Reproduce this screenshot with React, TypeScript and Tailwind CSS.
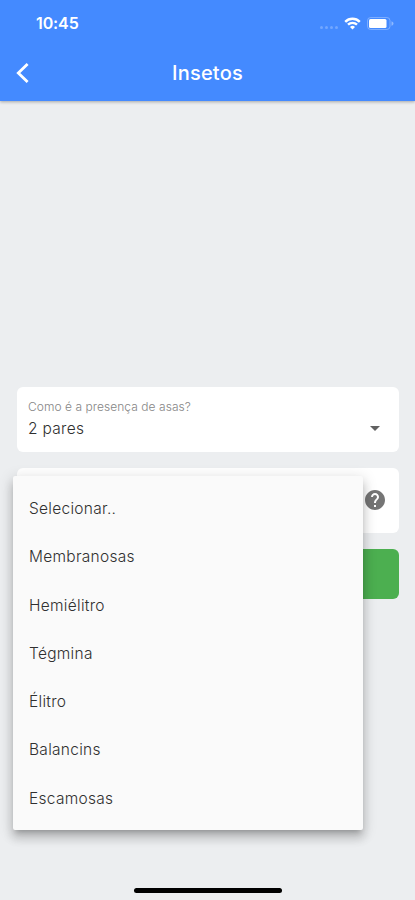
import React from 'react';

const options: string[] = [
  'Selecionar..',
  'Membranosas',
  'Hemiélitro',
  'Tégmina',
  'Élitro',
  'Balancins',
  'Escamosas',
];

const StatusBar: React.FC = () => (
  <div className="flex h-[46px] items-center justify-between pl-9 pr-[20px]">
    <span className="text-[16px] leading-none font-semibold tracking-[-0.1px]">10:45</span>
    <div className="flex items-center">
      {/* No signal */}
      <div className="mt-2 mr-[6px] flex gap-[2px]">
        {[0, 1, 2, 3].map((dot) => (
          <span key={dot} className="h-[3px] w-[3px] rounded-full bg-white/25" />
        ))}
      </div>
      <svg width="17" height="13" viewBox="0 0 17 13" fill="none" stroke="white" strokeWidth="2.4">
        <path d="M1.2 4.8a10.3 10.3 0 0 1 14.6 0" />
        <path d="M4 7.7a6.4 6.4 0 0 1 9 0" />
        <path d="M8.5 12.6L6 10a3.6 3.6 0 0 1 5 0z" fill="white" stroke="none" />
      </svg>
      <svg className="ml-[6px]" width="28" height="13" viewBox="0 0 28 13">
        <rect x="0.5" y="0.5" width="22.5" height="12" rx="3.2" fill="none" stroke="white" strokeOpacity="0.3" />
        <rect x="2" y="2" width="17.5" height="9" rx="1.5" fill="white" />
        <path d="M24.5 4.2v4.6c1.2-.4 2-1.3 2-2.3s-.8-1.900-2-2.300z" fill="white" fillOpacity="0.4" />
      </svg>
    </div>
  </div>
);

const Header: React.FC = () => (
  <header className="relative h-[100.5px] shrink-0 bg-[#448aff] text-white shadow-[0_1px_3px_rgba(0,0,0,0.3)]">
    <StatusBar />
    <div className="grid h-[54px] grid-cols-[56px_1fr_56px] items-center">
      <button aria-label="Voltar" className="pl-[15px]">
        <svg width="15" height="22" viewBox="0 0 15 22" fill="none" stroke="white" strokeWidth="2.8">
          <path d="M12.600 2L3.300 11l9.300 9" />
        </svg>
      </button>
      <h1 className="text-center text-[20px] leading-none font-medium tracking-[0.2px]">Insetos</h1>
    </div>
  </header>
);

const HelpIcon: React.FC = () => (
  <svg width="24" height="24" viewBox="0 0 24 24" fill="#757575">
    <path d="M12 2C6.480 2 2 6.480 2 12s4.480 10 10 10 10-4.480 10-10S17.520 2 12 2zm1 17h-2v-2h2v2zm2.070-7.750l-.9.920C13.450 12.900 13 13.500 13 15h-2v-.5c0-1.100.45-2.100 1.170-2.830l1.240-1.260c.37-.36.59-.86.59-1.410 0-1.100-.9-2-2-2s-2 .9-2 2H8c0-2.210 1.790-4 4-4s4 1.790 4 4c0 .88-.36 1.680-.93 2.250z" />
  </svg>
);

const Menu: React.FC = () => (
  <ul className="absolute top-[89px] left-[13px] w-[350px] rounded-[2px] bg-[#fafafa] pt-[8.500px] pb-[7.500px] shadow-[0_5px_5px_-3px_rgba(0,0,0,0.2),0_8px_10px_1px_rgba(0,0,0,0.14),0_3px_14px_2px_rgba(0,0,0,0.12)]">
    {options.map((option) => (
      <li key={option} className="flex h-[48.25px] items-center px-4 text-[15.5px] font-[360] tracking-[0.28px] text-[#303030]">
        {option}
      </li>
    ))}
  </ul>
);

const App: React.FC = () => (
  <div className="flex h-[900px] w-full flex-col overflow-hidden bg-[#eceef0] font-['Inter','Liberation_Sans',sans-serif]">
    <Header />

    <main className="relative mt-[286.5px] flex flex-1 flex-col px-4">
      <div className="ml-px flex h-[65px] shrink-0 items-end justify-between rounded-[6px] bg-white pr-3 pb-3 pl-[11px]">
        <div className="-mb-px">
          <p className="text-[12px] leading-[18px] font-[360] tracking-[0.05px] text-[#858585]">Como é a presença de asas?</p>
          <p className="mt-px text-[15.5px] leading-6 font-[360] tracking-[0.3px] text-[#303030]">2 pares</p>
        </div>
        <svg width="24" height="24" viewBox="0 0 24 24" fill="#616161">
          <path d="M7 10l5 5 5-5z" />
        </svg>
      </div>

      <div className="mt-4 ml-px flex h-[64.500px] shrink-0 items-center justify-end rounded-[6px] bg-white pr-3">
        <HelpIcon />
      </div>

      <button aria-label="Buscar" className="mt-4 ml-px h-[50px] shrink-0 rounded-[6px] bg-[#4caf50]" />

      <Menu />
    </main>

    {/* Home indicator */}
    <div className="mb-[7.5px] h-[5px] w-[148px] shrink-0 self-center rounded-full bg-black" />
  </div>
);

export default App;
